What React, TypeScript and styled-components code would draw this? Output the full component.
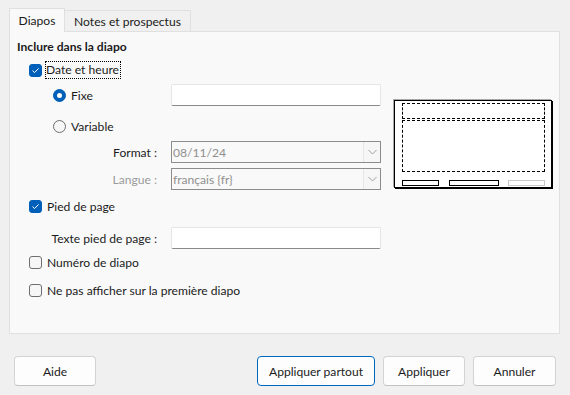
import styled, { createGlobalStyle } from "styled-components";

const GlobalStyle = createGlobalStyle`
  html, body {
    margin:0;
    padding:0;
  }
  body {
    background:#f0f0f0;
    font-family:Lato, "Noto Sans", sans-serif;
    font-size:12.1px;
    color:#1b1b1b;
  }
`;

const Dialog = styled.div`
  width:570px;
  height:395px;
  box-sizing:border-box;
  padding:8px 10px 0 9px;
  display:flex;
  flex-direction:column;
`;

const TabBar = styled.div`
  display:flex;
  align-items:flex-end;
  height:23px;
`;

const Tab = styled.div<{ $active?: boolean; $w: number }>`
  box-sizing:border-box;
  width:${p => p.$w}px;
  height:${p => (p.$active ? 24 : 21)}px;
  margin-bottom:${p => (p.$active ? -1 : 0)}px;
  position:relative;
  z-index:${p => (p.$active ? 1 : 0)};
  display:flex;
  align-items:center;
  justify-content:center;
  padding-top:${p => (p.$active ? 0 : 1)}px;
  background:${p => (p.$active ? "#f9f9f9" : "#f0f0f0")};
  border:1px solid #e0e0e0;
  border-bottom:none;
  border-left:${p => (p.$active ? "1px solid #e0e0e0" : "none")};
`;

const Panel = styled.div`
  box-sizing:border-box;
  height:303px;
  background:#f9f9f9;
  border:1px solid #e0e0e0;
  display:flex;
`;

const Form = styled.div`
  display:flex;
  flex-direction:column;
  padding:7px 0 0 7px;
`;

const Heading = styled.div`
  height:16px;
  line-height:16px;
  font-weight:bold;
`;

const Row = styled.div<{ $mt: number; $h?: number; $indent?: number }>`
  display:flex;
  align-items:center;
  margin-top:${p => p.$mt}px;
  height:${p => p.$h ?? 20}px;
  padding-left:${p => p.$indent ?? 0}px;
`;

const Lead = styled.div<{ $right?: boolean; $muted?: boolean; $indent?: number }>`
  width:154px;
  box-sizing:border-box;
  display:flex;
  align-items:center;
  justify-content:${p => (p.$right ? "flex-end" : "flex-start")};
  padding-left:${p => p.$indent ?? 0}px;
  padding-right:${p => (p.$right ? 14 : 0)}px;
  color:${p => (p.$muted ? "#9b9b9b" : "inherit")};
`;

const Box = styled.span<{ $checked?: boolean }>`
  box-sizing:border-box;
  width:13px;
  height:13px;
  border-radius:3px;
  display:inline-flex;
  align-items:center;
  justify-content:center;
  margin-right:5px;
  background:${p => (p.$checked ? "#005fb8" : "#f6f6f6")};
  border:1px solid ${p => (p.$checked ? "#005fb8" : "#6e6e6e")};
`;

const Radio = styled.span<{ $checked?: boolean }>`
  box-sizing:border-box;
  width:13px;
  height:13px;
  border-radius:50%;
  display:inline-flex;
  align-items:center;
  justify-content:center;
  margin-right:5px;
  background:${p => (p.$checked ? "#005fb8" : "#f6f6f6")};
  border:1px solid ${p => (p.$checked ? "#005fb8" : "#6e6e6e")};

  &::after{
    content:"";
    display:${p => (p.$checked ? "block" : "none")};
    width:5px;
    height:5px;
    border-radius:50%;
    background:#fff;
  }
`;

const Focused = styled.span`
  outline:1px dotted #000;
  padding:0 1px 0 0;
  margin-left:-1px;
  line-height:16px;
`;

const TextField = styled.div`
  box-sizing:border-box;
  width:210px;
  height:22px;
  background:#fff;
  border:1px solid #e6e6e6;
  border-bottom:1px solid #8a8a8a;
  border-radius:2px;
`;

const Select = styled.div`
  box-sizing:border-box;
  width:210px;
  height:22px;
  border:1px solid #8c8c8c;
  background:#f9f9f9;
  display:flex;
  align-items:center;
  color:#8f8f8f;
  padding-left:1px;

  span{
    flex:1;
  }
`;

const Arrow = styled.div`
  box-sizing:border-box;
  width:17px;
  height:20px;
  border-left:1px solid #e6e6e6;
  background:#f6f6f6;
  display:flex;
  align-items:center;
  justify-content:center;
`;

const PreviewCol = styled.div`
  padding:68px 0 0 13px;
`;

const Preview = styled.div`
  box-sizing:border-box;
  width:158px;
  height:88px;
  background:#fff;
  border:1px solid #000;
  box-shadow:-1px -1px 0 #a8a8a8, 1px 1px 0 #000;
  padding:2px 6px 0 7px;
  display:flex;
  flex-direction:column;
`;

const Dashed = styled.div<{ $h: number; $mt?: number }>`
  box-sizing:border-box;
  height:${p => p.$h}px;
  margin-top:${p => p.$mt ?? 0}px;
  border:1px dashed #000;
`;

const Slots = styled.div`
  display:flex;
  justify-content:space-between;
  margin-top:8px;
`;

const Slot = styled.div<{ $w: number; $faint?: boolean }>`
  box-sizing:border-box;
  width:${p => p.$w}px;
  height:6px;
  border:1px solid ${p => (p.$faint ? "#c8c8c8" : "#000")};
`;

const Footer = styled.div`
  display:flex;
  gap:8px;
  margin-top:22px;
  padding:0 4px 0 5px;
`;

const Button = styled.button<{ $primary?: boolean; $w: number }>`
  box-sizing:border-box;
  width:${p => p.$w}px;
  height:30px;
  font:inherit;
  color:#1b1b1b;
  background:#fdfdfd;
  border:1px solid ${p => (p.$primary ? "#0067c0" : "#d3d3d3")};
  border-bottom-color:${p => (p.$primary ? "#0067c0" : "#c2c2c2")};
  border-radius:4px;
  padding:0;
`;

const Spacer = styled.div`
  flex:1;
`;

const Check = () => (
  <svg width="9" height="9" viewBox="0 0 9 9">
    <path d="M1.5 4.6 L3.6 6.6 L7.6 2.4" fill="none" stroke="#fff" strokeWidth="1" />
  </svg>
);

const Chevron = () => (
  <svg width="9" height="6" viewBox="0 0 9 6">
    <path d="M0.5 1 L4.5 5 L8.5 1" fill="none" stroke="#a0a0a0" strokeWidth="1" />
  </svg>
);

export default function App() {
  return (
    <>
      <GlobalStyle />
      <Dialog>
        <TabBar>
          <Tab $active $w={56}>Diapos</Tab>
          <Tab $w={126}>Notes et prospectus</Tab>
        </TabBar>
        <Panel>
          <Form>
            <Heading>Inclure dans la diapo</Heading>
            <Row $mt={5} $indent={12}>
              <Box $checked><Check /></Box>
              <Focused>Date et heure</Focused>
            </Row>
            <Row $mt={4} $h={22}>
              <Lead $indent={36}>
                <Radio $checked />Fixe
              </Lead>
              <TextField />
            </Row>
            <Row $mt={10} $indent={36}>
              <Radio />Variable
            </Row>
            <Row $mt={5} $h={22}>
              <Lead $right>Format :</Lead>
              <Select>
                <span>08/11/24</span>
                <Arrow><Chevron /></Arrow>
              </Select>
            </Row>
            <Row $mt={5} $h={22}>
              <Lead $right $muted>Langue :</Lead>
              <Select>
                <span>français {"{fr}"}</span>
                <Arrow><Chevron /></Arrow>
              </Select>
            </Row>
            <Row $mt={6} $indent={12}>
              <Box $checked><Check /></Box>Pied de page
            </Row>
            <Row $mt={11} $h={22}>
              <Lead $right>Texte pied de page :</Lead>
              <TextField />
            </Row>
            <Row $mt={3} $indent={12}>
              <Box />Numéro de diapo
            </Row>
            <Row $mt={8} $indent={12}>
              <Box />Ne pas afficher sur la première diapo
            </Row>
          </Form>
          <PreviewCol>
            <Preview>
              <Dashed $h={16} />
              <Dashed $h={52} $mt={1} />
              <Slots>
                <Slot $w={37} />
                <Slot $w={50} />
                <Slot $w={37} $faint />
              </Slots>
            </Preview>
          </PreviewCol>
        </Panel>
        <Footer>
          <Button $w={82}>Aide</Button>
          <Spacer />
          <Button $primary $w={118}>Appliquer partout</Button>
          <Button $w={82}>Appliquer</Button>
          <Button $w={83}>Annuler</Button>
        </Footer>
      </Dialog>
    </>
  );
}
